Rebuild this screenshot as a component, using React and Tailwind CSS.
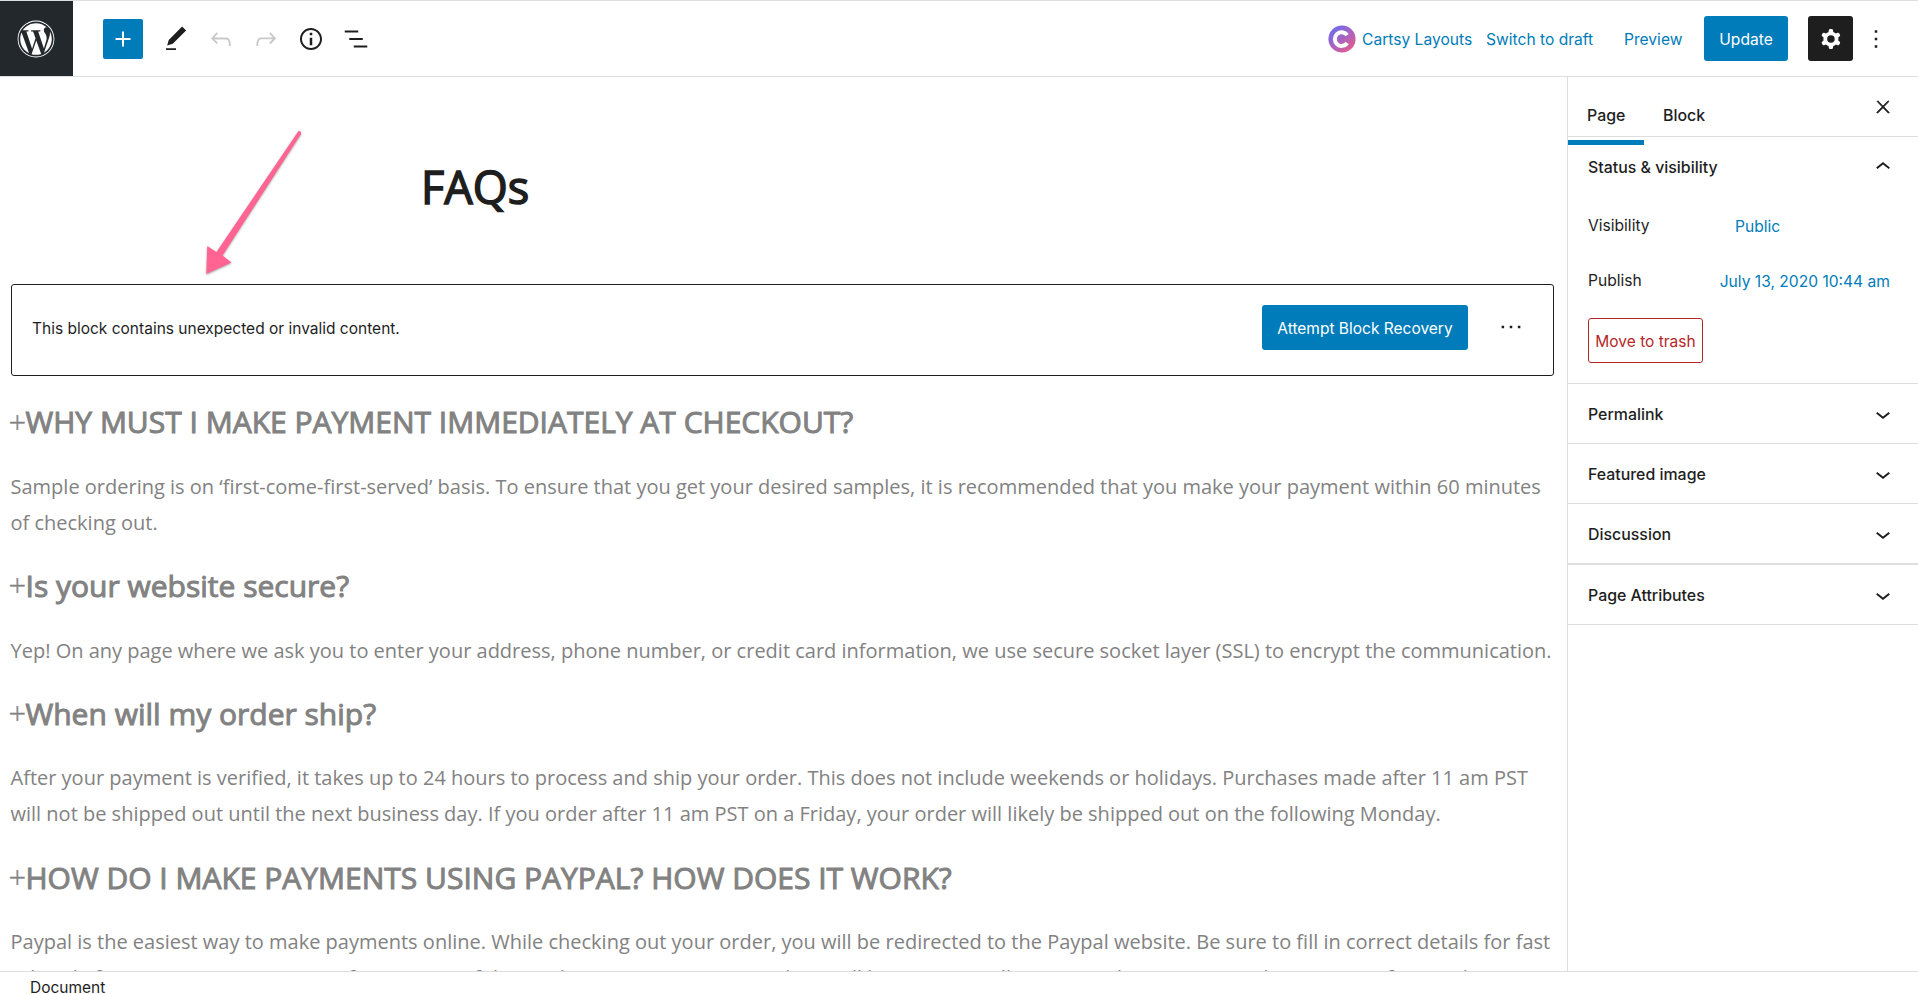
import React from 'react';
import { FaWordpress } from 'react-icons/fa';

const faqs = [
  {
    question: 'WHY MUST I MAKE PAYMENT IMMEDIATELY AT CHECKOUT?',
    lines: [
      'Sample ordering is on ‘first-come-first-served’ basis. To ensure that you get your desired samples, it is recommended that you make your payment within 60 minutes',
      'of checking out.'
    ]
  },
  {
    question: 'Is your website secure?',
    lines: [
      'Yep! On any page where we ask you to enter your address, phone number, or credit card information, we use secure socket layer (SSL) to encrypt the communication.'
    ]
  },
  {
    question: 'When will my order ship?',
    lines: [
      'After your payment is verified, it takes up to 24 hours to process and ship your order. This does not include weekends or holidays. Purchases made after 11 am PST',
      'will not be shipped out until the next business day. If you order after 11 am PST on a Friday, your order will likely be shipped out on the following Monday.'
    ]
  },
  {
    question: 'HOW DO I MAKE PAYMENTS USING PAYPAL? HOW DOES IT WORK?',
    lines: [
      'Paypal is the easiest way to make payments online. While checking out your order, you will be redirected to the Paypal website. Be sure to fill in correct details for fast',
      '& hassle free payment processing. After a successful Paypal payment, a payment advice will be automatically processed to customer admin center of our web.'
    ]
  }
];

const panels = [
  { title: 'Permalink', className: 'h-[60px] border-b' },
  { title: 'Featured image', className: 'h-[60px] border-b' },
  { title: 'Discussion', className: 'h-[61px] border-b-2' },
  { title: 'Page Attributes', className: 'h-[60px] border-b' }
];

function Icon({ children, className = '' }) {
  return (
    <svg viewBox="0 0 24 24" fill="currentColor" className={`h-[30px] w-[30px] shrink-0 ${className}`}>
      {children}
    </svg>
  );
}

function Chevron({ up }) {
  return (
    <Icon>
      {up ? (
        <path d="M6.5 12.4L12 8l5.5 4.4-.9 1.2L12 10l-4.5 3.6-1-1.2z" />
      ) : (
        <path d="M17.5 11.6L12 16l-5.5-4.4.9-1.2L12 14l4.5-3.6 1 1.2z" />
      )}
    </Icon>
  );
}

function Header() {
  return (
    <header className="flex h-[77px] shrink-0 items-center border-y border-[#dcdfe0] bg-white">
      <div className="flex h-[75px] w-[73px] shrink-0 items-center justify-center bg-[#23282d] pr-[2px]">
        <FaWordpress className="h-[38px] w-[38px] text-white" />
      </div>
      <div className="ml-[30px] flex items-center">
        <button className="flex h-10 w-10 items-center justify-center rounded-[2px] bg-[#007cba] text-white">
          <Icon>
            <path d="M18 11.2h-5.2V6h-1.6v5.2H6v1.6h5.2V18h1.6v-5.2H18z" />
          </Icon>
        </button>
        <Icon className="ml-[18px] text-[#1e1e1e]">
          <path d="M20.1 5.1L16.9 2 6.2 12.7l-1.3 4.4 4.5-1.3L20.1 5.1zM4 20.8h8v-1.5H4v1.5z" />
        </Icon>
        <Icon className="ml-[15px] text-[#c9c9c9]">
          <path d="M18.3 11.7c-.6-.6-1.4-.9-2.3-.9H6.7l2.9-3.3-1.1-1-4.5 5L8.5 16l1-1-2.7-2.7H16c.5 0 .9.2 1.3.5 1 1 1 3.4 1 4.5v.3h1.5v-.2c0-1.5 0-4.3-1.5-5.7z" />
        </Icon>
        <Icon className="ml-[15px] text-[#c9c9c9]">
          <path d="M15.6 6.5l-1.1 1 2.9 3.3H8c-.9 0-1.7.3-2.3.9-1.4 1.5-1.4 4.2-1.4 5.6v.2h1.5v-.3c0-1.1 0-3.5 1-4.5.3-.3.7-.5 1.3-.5h9.2L14.5 15l1.1 1.1 4.6-4.6-4.6-5z" />
        </Icon>
        <Icon className="ml-[15px] text-[#1e1e1e]">
          <path d="M12 3.2c-4.8 0-8.8 3.9-8.8 8.8 0 4.8 3.9 8.8 8.8 8.8 4.8 0 8.8-3.9 8.8-8.8 0-4.8-4-8.8-8.8-8.8zm0 16c-4 0-7.2-3.3-7.2-7.2C4.8 8 8 4.8 12 4.8s7.2 3.3 7.2 7.2c0 4-3.2 7.2-7.2 7.2zM11 17h2v-6h-2v6zm0-8h2V7h-2v2z" />
        </Icon>
        <Icon className="ml-[15px] text-[#1e1e1e]">
          <path d="M13.8 5.2H3v1.5h10.8V5.2zm-3.6 12v1.5H21v-1.5H10.2zm7.2-6H6.6v1.5h10.8v-1.5z" />
        </Icon>
      </div>

      <div className="ml-auto flex items-center text-[15.6px] text-[#007cba]">
        <svg viewBox="0 0 28 28" className="h-[28px] w-[28px]">
          <defs>
            <linearGradient id="cartsy" x1="0.15" y1="0.1" x2="0.85" y2="0.95">
              <stop offset="0" stopColor="#6f6af0" />
              <stop offset="1" stopColor="#e65c8c" />
            </linearGradient>
          </defs>
          <circle cx="14" cy="14" r="13.6" fill="url(#cartsy)" />
          <path d="M19.2 10.2a6.8 6.8 0 1 0 0 7.8" fill="none" stroke="white" strokeWidth="4" />
        </svg>
        <span className="ml-[6px] w-[110px] whitespace-nowrap pt-[2px]">Cartsy Layouts</span>
        <span className="ml-[14px] w-[108px] whitespace-nowrap pt-[2px]">Switch to draft</span>
        <span className="ml-[30px] w-[59px] whitespace-nowrap pt-[2px]">Preview</span>
        <button className="ml-[21px] h-[45px] w-[84px] rounded-[3px] bg-[#007cba] pt-[2px] text-white">Update</button>
        <button className="ml-5 flex h-[45px] w-[45px] items-center justify-center rounded-[3px] bg-[#1e1e1e] text-white">
          <Icon>
            <path
              fillRule="evenodd"
              d="M10.289 4.836A1 1 0 0111.275 4h1.306a1 1 0 01.987.836l.244 1.466c.787.26 1.503.679 2.108 1.218l1.393-.522a1 1 0 011.216.437l.653 1.13a1 1 0 01-.23 1.273l-1.148.944a6.025 6.025 0 010 2.435l1.149.946a1 1 0 01.23 1.272l-.653 1.13a1 1 0 01-1.216.437l-1.394-.522c-.605.54-1.32.958-2.108 1.218l-.244 1.466a1 1 0 01-.987.836h-1.306a1 1 0 01-.986-.836l-.244-1.466a5.995 5.995 0 01-2.108-1.218l-1.394.522a1 1 0 01-1.217-.436l-.653-1.131a1 1 0 01.23-1.272l1.149-.946a6.026 6.026 0 010-2.435l-1.148-.944a1 1 0 01-.23-1.272l.653-1.131a1 1 0 011.217-.437l1.393.522a5.994 5.994 0 012.108-1.218l.244-1.466zM14.929 12a3 3 0 11-6 0 3 3 0 016 0z"
            />
          </Icon>
        </button>
        <Icon className="ml-2 mr-[27px] text-[#1e1e1e]">
          <path d="M11 5h2v2h-2zM11 11h2v2h-2zM11 17h2v2h-2z" />
        </Icon>
      </div>
    </header>
  );
}

function InvalidBlock() {
  return (
    <div className="ml-[11px] mt-[63px] flex h-[92px] w-[1543px] items-start rounded-[3px] border border-[#1e1e1e] pt-5 text-[15.5px]">
      <p className="ml-5 flex h-[45px] items-center pt-[2px] text-[#1e1e1e]">This block contains unexpected or invalid content.</p>
      <button className="ml-auto h-[45px] w-[206px] rounded-[3px] bg-[#007cba] pt-[2px] text-white">Attempt Block Recovery</button>
      <Icon className="ml-[28px] mr-[27px] mt-[7px] text-[#1e1e1e]">
        <path d="M4.5 11h2v2h-2zM11 11h2v2h-2zM17.5 11h2v2h-2z" />
      </Icon>
    </div>
  );
}

function Editor() {
  return (
    <main className="relative h-full w-[1567px] shrink-0 overflow-hidden">
      <h1 className="ml-[421px] mt-[76px] h-[68px] font-['Open_Sans',sans-serif] text-[45px] leading-[68px] text-[#1e1e1e] [-webkit-text-stroke:1.5px_#1e1e1e]">
        FAQs
      </h1>
      <InvalidBlock />
      <div className="ml-[10.5px] font-['Open_Sans',sans-serif] text-[#828282]">
        {faqs.map((faq) => (
          <section key={faq.question} className="whitespace-nowrap">
            <h2 className="flex h-[91.8px] items-center text-[30px]">
              <span className="-ml-[2px] w-[17px] text-[31px] font-light [-webkit-text-stroke:0.3px_#828282]">+</span>
              <span className="[-webkit-text-stroke:1px_#828282]">{faq.question}</span>
            </h2>
            {faq.lines.map((line) => (
              <p key={line} className="h-9 text-[20px] leading-[37px]">{line}</p>
            ))}
          </section>
        ))}
      </div>

      {/* Arrow pointing at the broken block */}
      <svg
        viewBox="0 0 110 155"
        className="absolute left-[200px] top-[47px] h-[155px] w-[110px] drop-shadow-[0_1px_1px_rgba(0,0,0,0.35)]"
      >
        <path
          d="M98.5 7Q101.5 6.5 101 10L22.5 131.5L31.5 138.5L6.3 150L7.3 122L16.5 128Z"
          fill="#ff6492"
        />
      </svg>
    </main>
  );
}

function Sidebar() {
  return (
    <aside className="h-full flex-1 border-l border-[#dddddd] text-[15.6px] text-[#1e1e1e]">
      <div className="flex h-[60px] border-b border-[#dddddd] text-[15.9px] font-medium">
        <div className="relative w-[76px] pl-[19px] pt-[27px]">
          Page
          <span className="absolute left-0 top-[63px] h-[5px] w-[76px] bg-[#007cba]" />
        </div>
        <div className="pl-[19px] pt-[27px]">Block</div>
        <Icon className="ml-auto mr-5 mt-[15px]">
          <path d="M13 11.8l6.1-6.3-1-1-6.1 6.2-6.1-6.2-1 1 6.1 6.3-6.5 6.7 1 1 6.5-6.6 6.5 6.6 1-1z" transform="translate(4 4) scale(.667)" stroke="currentColor" strokeWidth=".9" />
        </Icon>
      </div>

      <div className="h-[247px] border-b border-[#dddddd] pl-5">
        <div className="flex h-[60px] items-center justify-between pr-5 text-[15.9px] font-medium">
          <span className="pt-px">Status &amp; visibility</span>
          <Chevron up />
        </div>
        <div className="mt-[5px] flex h-[48px] items-center">
          <span className="w-[147px]">Visibility</span>
          <span className="pt-[2px] text-[#007cba]">Public</span>
        </div>
        <div className="mt-[7px] flex h-[48px] items-center justify-between pr-7">
          <span>Publish</span>
          <span className="pt-[2px] text-[#007cba]">July 13, 2020 10:44 am</span>
        </div>
        <button className="mt-[13px] h-[45px] w-[115px] whitespace-nowrap rounded-[3px] border border-[#b52727] pt-[2px] text-[15.5px] text-[#b52727]">
          Move to trash
        </button>
      </div>

      {panels.map((panel) => (
        <div
          key={panel.title}
          className={`flex items-center justify-between border-[#dddddd] pl-5 pr-5 text-[15.9px] font-medium ${panel.className}`}
        >
          <span className="pt-[2px]">{panel.title}</span>
          <Chevron />
        </div>
      ))}
    </aside>
  );
}

function App() {
  return (
    <div className="flex h-[994px] w-[1918px] flex-col overflow-hidden bg-white font-['Inter',sans-serif]">
      <Header />
      <div className="flex min-h-0 flex-1">
        <Editor />
        <Sidebar />
      </div>
      <footer className="h-[23px] shrink-0 border-t border-[#dddddd] pl-[30px] pt-[9px] text-[15.5px] leading-[13px] text-[#1e1e1e]">
        Document
      </footer>
    </div>
  );
}

export default App;
